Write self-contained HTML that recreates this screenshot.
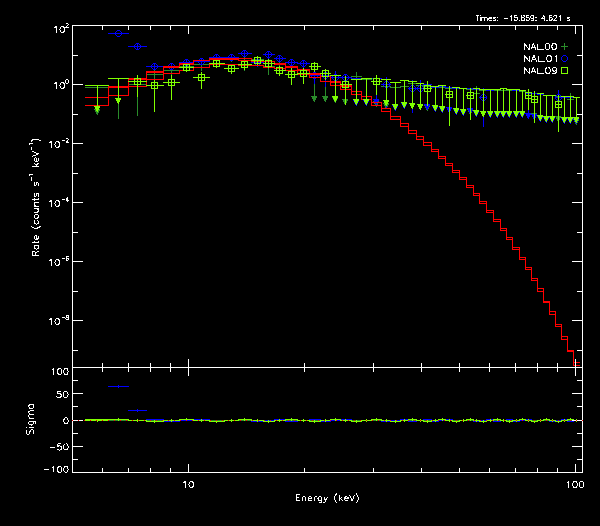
<!DOCTYPE html><html><head><meta charset="utf-8"><style>html,body{margin:0;padding:0;background:#000;width:600px;height:526px;overflow:hidden;position:relative}</style></head><body><svg width="600" height="526" viewBox="0 0 600 526" style="position:absolute;left:0;top:0" shape-rendering="crispEdges">
<rect width="600" height="526" fill="#000"/>
<path d="M85 87h24v1h-24zM97 87h1v23h-1zM94 109h6v1h-6zM95 110h5v1h-5zM95 111h4v1h-4zM96 112h3v1h-3zM96 113h2v1h-2zM97 114h1v1h-1zM108 87h21v1h-21zM118 80h1v39h-1zM115 87h7v1h-7zM118 84h1v7h-1zM128 84h19v1h-19zM137 77h1v39h-1zM134 84h7v1h-7zM137 81h1v7h-1zM146 74h18v1h-18zM154 70h1v21h-1zM151 74h7v1h-7zM154 71h1v7h-1zM163 70h17v1h-17zM171 66h1v10h-1zM168 70h7v1h-7zM171 67h1v7h-1zM179 66h15v1h-15zM186 62h1v10h-1zM183 66h7v1h-7zM186 63h1v7h-1zM193 64h17v1h-17zM201 60h1v11h-1zM198 64h7v1h-7zM201 61h1v7h-1zM209 59h16v1h-16zM216 56h1v8h-1zM213 59h7v1h-7zM216 56h1v7h-1zM224 57h15v1h-15zM231 54h1v8h-1zM228 57h7v1h-7zM231 54h1v7h-1zM238 60h14v1h-14zM244 58h1v13h-1zM241 60h7v1h-7zM244 57h1v7h-1zM251 59h13v1h-13zM257 56h1v9h-1zM254 59h7v1h-7zM257 56h1v7h-1zM263 66h12v1h-12zM268 60h1v15h-1zM265 66h7v1h-7zM268 63h1v7h-1zM274 63h12v1h-12zM279 60h1v9h-1zM276 63h7v1h-7zM279 60h1v7h-1zM285 67h13v1h-13zM291 63h1v12h-1zM288 67h7v1h-7zM291 64h1v7h-1zM297 70h13v1h-13zM303 65h1v12h-1zM300 70h7v1h-7zM303 67h1v7h-1zM309 75h12v1h-12zM314 75h1v22h-1zM311 96h6v1h-6zM312 97h5v1h-5zM312 98h4v1h-4zM313 99h3v1h-3zM313 100h2v1h-2zM314 101h1v1h-1zM320 76h11v1h-11zM325 76h1v21h-1zM322 96h6v1h-6zM323 97h5v1h-5zM323 98h4v1h-4zM324 99h3v1h-3zM324 100h2v1h-2zM325 101h1v1h-1zM330 81h11v1h-11zM335 81h1v17h-1zM332 97h6v1h-6zM333 98h5v1h-5zM333 99h4v1h-4zM334 100h3v1h-3zM334 101h2v1h-2zM335 102h1v1h-1zM340 84h12v1h-12zM345 84h1v16h-1zM342 99h6v1h-6zM343 100h5v1h-5zM343 101h4v1h-4zM344 102h3v1h-3zM344 103h2v1h-2zM345 104h1v1h-1zM351 76h11v1h-11zM356 72h1v9h-1zM353 76h7v1h-7zM356 73h1v7h-1zM361 79h11v1h-11zM366 79h1v21h-1zM363 99h6v1h-6zM364 100h5v1h-5zM364 101h4v1h-4zM365 102h3v1h-3zM365 103h2v1h-2zM366 104h1v1h-1zM371 81h11v1h-11zM376 81h1v21h-1zM373 101h6v1h-6zM374 102h5v1h-5zM374 103h4v1h-4zM375 104h3v1h-3zM375 105h2v1h-2zM376 106h1v1h-1zM381 86h10v1h-10zM386 86h1v18h-1zM383 103h6v1h-6zM384 104h5v1h-5zM384 105h4v1h-4zM385 106h3v1h-3zM385 107h2v1h-2zM386 108h1v1h-1zM390 87h11v1h-11zM395 87h1v18h-1zM392 104h6v1h-6zM393 105h5v1h-5zM393 106h4v1h-4zM394 107h3v1h-3zM394 108h2v1h-2zM395 109h1v1h-1zM400 86h9v1h-9zM404 86h1v18h-1zM401 103h6v1h-6zM402 104h5v1h-5zM402 105h4v1h-4zM403 106h3v1h-3zM403 107h2v1h-2zM404 108h1v1h-1zM408 83h9v1h-9zM412 83h1v21h-1zM409 103h6v1h-6zM410 104h5v1h-5zM410 105h4v1h-4zM411 106h3v1h-3zM411 107h2v1h-2zM412 108h1v1h-1zM416 85h8v1h-8zM420 85h1v20h-1zM417 104h6v1h-6zM418 105h5v1h-5zM418 106h4v1h-4zM419 107h3v1h-3zM419 108h2v1h-2zM420 109h1v1h-1zM423 86h9v1h-9zM427 86h1v20h-1zM424 105h6v1h-6zM425 106h5v1h-5zM425 107h4v1h-4zM426 108h3v1h-3zM426 109h2v1h-2zM427 110h1v1h-1zM431 86h8v1h-8zM435 86h1v20h-1zM432 105h6v1h-6zM433 106h5v1h-5zM433 107h4v1h-4zM434 108h3v1h-3zM434 109h2v1h-2zM435 110h1v1h-1zM438 87h8v1h-8zM442 87h1v20h-1zM439 106h6v1h-6zM440 107h5v1h-5zM440 108h4v1h-4zM441 109h3v1h-3zM441 110h2v1h-2zM442 111h1v1h-1zM445 88h8v1h-8zM449 88h1v20h-1zM446 107h6v1h-6zM447 108h5v1h-5zM447 109h4v1h-4zM448 110h3v1h-3zM448 111h2v1h-2zM449 112h1v1h-1zM452 88h8v1h-8zM456 88h1v21h-1zM453 108h6v1h-6zM454 109h5v1h-5zM454 110h4v1h-4zM455 111h3v1h-3zM455 112h2v1h-2zM456 113h1v1h-1zM459 88h8v1h-8zM463 88h1v22h-1zM460 109h6v1h-6zM461 110h5v1h-5zM461 111h4v1h-4zM462 112h3v1h-3zM462 113h2v1h-2zM463 114h1v1h-1zM466 89h8v1h-8zM470 89h1v21h-1zM467 109h6v1h-6zM468 110h5v1h-5zM468 111h4v1h-4zM469 112h3v1h-3zM469 113h2v1h-2zM470 114h1v1h-1zM473 93h7v1h-7zM476 86h1v15h-1zM473 93h7v1h-7zM476 90h1v7h-1zM479 90h8v1h-8zM483 90h1v22h-1zM480 111h6v1h-6zM481 112h5v1h-5zM481 113h4v1h-4zM482 114h3v1h-3zM482 115h2v1h-2zM483 116h1v1h-1zM486 90h8v1h-8zM490 90h1v22h-1zM487 111h6v1h-6zM488 112h5v1h-5zM488 113h4v1h-4zM489 114h3v1h-3zM489 115h2v1h-2zM490 116h1v1h-1zM493 90h8v1h-8zM497 90h1v22h-1zM494 111h6v1h-6zM495 112h5v1h-5zM495 113h4v1h-4zM496 114h3v1h-3zM496 115h2v1h-2zM497 116h1v1h-1zM500 90h7v1h-7zM503 90h1v22h-1zM500 111h6v1h-6zM501 112h5v1h-5zM501 113h4v1h-4zM502 114h3v1h-3zM502 115h2v1h-2zM503 116h1v1h-1zM506 90h7v1h-7zM509 90h1v22h-1zM506 111h6v1h-6zM507 112h5v1h-5zM507 113h4v1h-4zM508 114h3v1h-3zM508 115h2v1h-2zM509 116h1v1h-1zM512 90h8v1h-8zM516 90h1v22h-1zM513 111h6v1h-6zM514 112h5v1h-5zM514 113h4v1h-4zM515 114h3v1h-3zM515 115h2v1h-2zM516 116h1v1h-1zM519 91h7v1h-7zM522 91h1v22h-1zM519 112h6v1h-6zM520 113h5v1h-5zM520 114h4v1h-4zM521 115h3v1h-3zM521 116h2v1h-2zM522 117h1v1h-1zM525 92h7v1h-7zM528 92h1v22h-1zM525 113h6v1h-6zM526 114h5v1h-5zM526 115h4v1h-4zM527 116h3v1h-3zM527 117h2v1h-2zM528 118h1v1h-1zM531 93h7v1h-7zM534 93h1v21h-1zM531 113h6v1h-6zM532 114h5v1h-5zM532 115h4v1h-4zM533 116h3v1h-3zM533 117h2v1h-2zM534 118h1v1h-1zM537 94h7v1h-7zM540 94h1v22h-1zM537 115h6v1h-6zM538 116h5v1h-5zM538 117h4v1h-4zM539 118h3v1h-3zM539 119h2v1h-2zM540 120h1v1h-1zM543 95h7v1h-7zM546 95h1v22h-1zM543 116h6v1h-6zM544 117h5v1h-5zM544 118h4v1h-4zM545 119h3v1h-3zM545 120h2v1h-2zM546 121h1v1h-1zM549 95h7v1h-7zM552 95h1v23h-1zM549 117h6v1h-6zM550 118h5v1h-5zM550 119h4v1h-4zM551 120h3v1h-3zM551 121h2v1h-2zM552 122h1v1h-1zM555 96h7v1h-7zM558 96h1v21h-1zM555 116h6v1h-6zM556 117h5v1h-5zM556 118h4v1h-4zM557 119h3v1h-3zM557 120h2v1h-2zM558 121h1v1h-1zM561 96h7v1h-7zM564 96h1v23h-1zM561 118h6v1h-6zM562 119h5v1h-5zM562 120h4v1h-4zM563 121h3v1h-3zM563 122h2v1h-2zM564 123h1v1h-1zM567 99h7v1h-7zM570 93h1v13h-1zM567 99h7v1h-7zM570 96h1v7h-1zM573 97h7v1h-7zM576 97h1v23h-1zM573 119h6v1h-6zM574 120h5v1h-5zM574 121h4v1h-4zM575 122h3v1h-3zM575 123h2v1h-2zM576 124h1v1h-1z" fill="#2a8c2a"/>
<path d="M108 33h21v1h-21zM118 33h1v1h-1zM117 30h3v1h-3zM117 36h3v1h-3zM116 31h1v1h-1zM120 31h1v1h-1zM116 35h1v1h-1zM120 35h1v1h-1zM115 32h1v3h-1zM121 32h1v3h-1zM128 46h19v1h-19zM137 44h1v5h-1zM136 43h3v1h-3zM136 49h3v1h-3zM135 44h1v1h-1zM139 44h1v1h-1zM135 48h1v1h-1zM139 48h1v1h-1zM134 45h1v3h-1zM140 45h1v3h-1zM146 66h18v1h-18zM154 63h1v7h-1zM153 63h3v1h-3zM153 69h3v1h-3zM152 64h1v1h-1zM156 64h1v1h-1zM152 68h1v1h-1zM156 68h1v1h-1zM151 65h1v3h-1zM157 65h1v3h-1zM163 66h17v1h-17zM171 63h1v7h-1zM170 63h3v1h-3zM170 69h3v1h-3zM169 64h1v1h-1zM173 64h1v1h-1zM169 68h1v1h-1zM173 68h1v1h-1zM168 65h1v3h-1zM174 65h1v3h-1zM179 62h15v1h-15zM186 59h1v7h-1zM185 59h3v1h-3zM185 65h3v1h-3zM184 60h1v1h-1zM188 60h1v1h-1zM184 64h1v1h-1zM188 64h1v1h-1zM183 61h1v3h-1zM189 61h1v3h-1zM193 61h17v1h-17zM201 58h1v7h-1zM200 58h3v1h-3zM200 64h3v1h-3zM199 59h1v1h-1zM203 59h1v1h-1zM199 63h1v1h-1zM203 63h1v1h-1zM198 60h1v3h-1zM204 60h1v3h-1zM209 57h16v1h-16zM216 54h1v8h-1zM215 54h3v1h-3zM215 60h3v1h-3zM214 55h1v1h-1zM218 55h1v1h-1zM214 59h1v1h-1zM218 59h1v1h-1zM213 56h1v3h-1zM219 56h1v3h-1zM224 57h15v1h-15zM231 54h1v7h-1zM230 54h3v1h-3zM230 60h3v1h-3zM229 55h1v1h-1zM233 55h1v1h-1zM229 59h1v1h-1zM233 59h1v1h-1zM228 56h1v3h-1zM234 56h1v3h-1zM238 53h14v1h-14zM244 50h1v7h-1zM243 50h3v1h-3zM243 56h3v1h-3zM242 51h1v1h-1zM246 51h1v1h-1zM242 55h1v1h-1zM246 55h1v1h-1zM241 52h1v3h-1zM247 52h1v3h-1zM251 62h13v1h-13zM257 58h1v9h-1zM256 59h3v1h-3zM256 65h3v1h-3zM255 60h1v1h-1zM259 60h1v1h-1zM255 64h1v1h-1zM259 64h1v1h-1zM254 61h1v3h-1zM260 61h1v3h-1zM263 54h12v1h-12zM268 51h1v8h-1zM267 51h3v1h-3zM267 57h3v1h-3zM266 52h1v1h-1zM270 52h1v1h-1zM266 56h1v1h-1zM270 56h1v1h-1zM265 53h1v3h-1zM271 53h1v3h-1zM274 58h12v1h-12zM279 55h1v7h-1zM278 55h3v1h-3zM278 61h3v1h-3zM277 56h1v1h-1zM281 56h1v1h-1zM277 60h1v1h-1zM281 60h1v1h-1zM276 57h1v3h-1zM282 57h1v3h-1zM285 62h13v1h-13zM291 59h1v8h-1zM290 59h3v1h-3zM290 65h3v1h-3zM289 60h1v1h-1zM293 60h1v1h-1zM289 64h1v1h-1zM293 64h1v1h-1zM288 61h1v3h-1zM294 61h1v3h-1zM297 63h13v1h-13zM303 60h1v8h-1zM302 60h3v1h-3zM302 66h3v1h-3zM301 61h1v1h-1zM305 61h1v1h-1zM301 65h1v1h-1zM305 65h1v1h-1zM300 62h1v3h-1zM306 62h1v3h-1zM309 75h12v1h-12zM314 69h1v15h-1zM313 72h3v1h-3zM313 78h3v1h-3zM312 73h1v1h-1zM316 73h1v1h-1zM312 77h1v1h-1zM316 77h1v1h-1zM311 74h1v3h-1zM317 74h1v3h-1zM320 75h11v1h-11zM325 71h1v16h-1zM324 72h3v1h-3zM324 78h3v1h-3zM323 73h1v1h-1zM327 73h1v1h-1zM323 77h1v1h-1zM327 77h1v1h-1zM322 74h1v3h-1zM328 74h1v3h-1zM330 77h11v1h-11zM335 71h1v14h-1zM334 74h3v1h-3zM334 80h3v1h-3zM333 75h1v1h-1zM337 75h1v1h-1zM333 79h1v1h-1zM337 79h1v1h-1zM332 76h1v3h-1zM338 76h1v3h-1zM340 77h12v1h-12zM345 74h1v15h-1zM344 74h3v1h-3zM344 80h3v1h-3zM343 75h1v1h-1zM347 75h1v1h-1zM343 79h1v1h-1zM347 79h1v1h-1zM342 76h1v3h-1zM348 76h1v3h-1zM351 78h11v1h-11zM356 78h1v23h-1zM353 100h6v1h-6zM354 101h5v1h-5zM354 102h4v1h-4zM355 103h3v1h-3zM355 104h2v1h-2zM356 105h1v1h-1zM361 78h11v1h-11zM366 78h1v23h-1zM363 100h6v1h-6zM364 101h5v1h-5zM364 102h4v1h-4zM365 103h3v1h-3zM365 104h2v1h-2zM366 105h1v1h-1zM371 78h11v1h-11zM376 78h1v22h-1zM373 99h6v1h-6zM374 100h5v1h-5zM374 101h4v1h-4zM375 102h3v1h-3zM375 103h2v1h-2zM376 104h1v1h-1zM381 84h10v1h-10zM386 77h1v31h-1zM385 81h3v1h-3zM385 87h3v1h-3zM384 82h1v1h-1zM388 82h1v1h-1zM384 86h1v1h-1zM388 86h1v1h-1zM383 83h1v3h-1zM389 83h1v3h-1zM390 82h11v1h-11zM395 82h1v24h-1zM392 105h6v1h-6zM393 106h5v1h-5zM393 107h4v1h-4zM394 108h3v1h-3zM394 109h2v1h-2zM395 110h1v1h-1zM400 80h9v1h-9zM404 80h1v24h-1zM401 103h6v1h-6zM402 104h5v1h-5zM402 105h4v1h-4zM403 106h3v1h-3zM403 107h2v1h-2zM404 108h1v1h-1zM408 88h9v1h-9zM412 80h1v33h-1zM411 85h3v1h-3zM411 91h3v1h-3zM410 86h1v1h-1zM414 86h1v1h-1zM410 90h1v1h-1zM414 90h1v1h-1zM409 87h1v3h-1zM415 87h1v3h-1zM416 88h8v1h-8zM420 80h1v27h-1zM419 85h3v1h-3zM419 91h3v1h-3zM418 86h1v1h-1zM422 86h1v1h-1zM418 90h1v1h-1zM422 90h1v1h-1zM417 87h1v3h-1zM423 87h1v3h-1zM423 84h9v1h-9zM427 84h1v21h-1zM424 104h6v1h-6zM425 105h5v1h-5zM425 106h4v1h-4zM426 107h3v1h-3zM426 108h2v1h-2zM427 109h1v1h-1zM431 87h8v1h-8zM435 87h1v20h-1zM432 106h6v1h-6zM433 107h5v1h-5zM433 108h4v1h-4zM434 109h3v1h-3zM434 110h2v1h-2zM435 111h1v1h-1zM438 86h8v1h-8zM442 86h1v22h-1zM439 107h6v1h-6zM440 108h5v1h-5zM440 109h4v1h-4zM441 110h3v1h-3zM441 111h2v1h-2zM442 112h1v1h-1zM445 87h8v1h-8zM449 87h1v21h-1zM446 107h6v1h-6zM447 108h5v1h-5zM447 109h4v1h-4zM448 110h3v1h-3zM448 111h2v1h-2zM449 112h1v1h-1zM452 88h8v1h-8zM456 88h1v22h-1zM453 109h6v1h-6zM454 110h5v1h-5zM454 111h4v1h-4zM455 112h3v1h-3zM455 113h2v1h-2zM456 114h1v1h-1zM459 88h8v1h-8zM463 88h1v23h-1zM460 110h6v1h-6zM461 111h5v1h-5zM461 112h4v1h-4zM462 113h3v1h-3zM462 114h2v1h-2zM463 115h1v1h-1zM466 88h8v1h-8zM470 88h1v21h-1zM467 108h6v1h-6zM468 109h5v1h-5zM468 110h4v1h-4zM469 111h3v1h-3zM469 112h2v1h-2zM470 113h1v1h-1zM473 89h7v1h-7zM476 89h1v23h-1zM473 111h6v1h-6zM474 112h5v1h-5zM474 113h4v1h-4zM475 114h3v1h-3zM475 115h2v1h-2zM476 116h1v1h-1zM479 97h8v1h-8zM483 88h1v39h-1zM482 94h3v1h-3zM482 100h3v1h-3zM481 95h1v1h-1zM485 95h1v1h-1zM481 99h1v1h-1zM485 99h1v1h-1zM480 96h1v3h-1zM486 96h1v3h-1zM486 90h8v1h-8zM490 90h1v23h-1zM487 112h6v1h-6zM488 113h5v1h-5zM488 114h4v1h-4zM489 115h3v1h-3zM489 116h2v1h-2zM490 117h1v1h-1zM493 89h8v1h-8zM497 89h1v24h-1zM494 112h6v1h-6zM495 113h5v1h-5zM495 114h4v1h-4zM496 115h3v1h-3zM496 116h2v1h-2zM497 117h1v1h-1zM500 88h7v1h-7zM503 88h1v25h-1zM500 112h6v1h-6zM501 113h5v1h-5zM501 114h4v1h-4zM502 115h3v1h-3zM502 116h2v1h-2zM503 117h1v1h-1zM506 89h7v1h-7zM509 89h1v24h-1zM506 112h6v1h-6zM507 113h5v1h-5zM507 114h4v1h-4zM508 115h3v1h-3zM508 116h2v1h-2zM509 117h1v1h-1zM512 90h8v1h-8zM516 90h1v23h-1zM513 112h6v1h-6zM514 113h5v1h-5zM514 114h4v1h-4zM515 115h3v1h-3zM515 116h2v1h-2zM516 117h1v1h-1zM519 90h7v1h-7zM522 90h1v23h-1zM519 112h6v1h-6zM520 113h5v1h-5zM520 114h4v1h-4zM521 115h3v1h-3zM521 116h2v1h-2zM522 117h1v1h-1zM525 93h7v1h-7zM528 93h1v21h-1zM525 113h6v1h-6zM526 114h5v1h-5zM526 115h4v1h-4zM527 116h3v1h-3zM527 117h2v1h-2zM528 118h1v1h-1zM531 93h7v1h-7zM534 93h1v22h-1zM531 114h6v1h-6zM532 115h5v1h-5zM532 116h4v1h-4zM533 117h3v1h-3zM533 118h2v1h-2zM534 119h1v1h-1zM537 94h7v1h-7zM540 94h1v23h-1zM537 116h6v1h-6zM538 117h5v1h-5zM538 118h4v1h-4zM539 119h3v1h-3zM539 120h2v1h-2zM540 121h1v1h-1zM543 95h7v1h-7zM546 95h1v23h-1zM543 117h6v1h-6zM544 118h5v1h-5zM544 119h4v1h-4zM545 120h3v1h-3zM545 121h2v1h-2zM546 122h1v1h-1zM549 95h7v1h-7zM552 95h1v23h-1zM549 117h6v1h-6zM550 118h5v1h-5zM550 119h4v1h-4zM551 120h3v1h-3zM551 121h2v1h-2zM552 122h1v1h-1zM555 97h7v1h-7zM558 90h1v31h-1zM557 94h3v1h-3zM557 100h3v1h-3zM556 95h1v1h-1zM560 95h1v1h-1zM556 99h1v1h-1zM560 99h1v1h-1zM555 96h1v3h-1zM561 96h1v3h-1zM561 97h7v1h-7zM564 97h1v22h-1zM561 118h6v1h-6zM562 119h5v1h-5zM562 120h4v1h-4zM563 121h3v1h-3zM563 122h2v1h-2zM564 123h1v1h-1zM567 97h7v1h-7zM570 97h1v22h-1zM567 118h6v1h-6zM568 119h5v1h-5zM568 120h4v1h-4zM569 121h3v1h-3zM569 122h2v1h-2zM570 123h1v1h-1zM573 97h7v1h-7zM576 97h1v22h-1zM573 118h6v1h-6zM574 119h5v1h-5zM574 120h4v1h-4zM575 121h3v1h-3zM575 122h2v1h-2zM576 123h1v1h-1z" fill="#0000ff"/>
<path d="M85 97h24v1h-24zM108 86h21v1h-21zM108 86h1v12h-1zM128 78h19v1h-19zM128 78h1v9h-1zM146 71h18v1h-18zM146 71h1v8h-1zM163 66h17v1h-17zM163 66h1v6h-1zM179 63h15v1h-15zM179 63h1v4h-1zM193 60h17v1h-17zM193 60h1v4h-1zM209 58h16v1h-16zM209 58h1v3h-1zM224 58h15v1h-15zM224 58h1v1h-1zM238 58h14v1h-14zM238 58h1v1h-1zM251 60h13v1h-13zM251 58h1v3h-1zM263 61h12v1h-12zM263 60h1v2h-1zM274 63h12v1h-12zM274 61h1v3h-1zM285 66h13v1h-13zM285 63h1v4h-1zM297 69h13v1h-13zM297 66h1v4h-1zM309 73h12v1h-12zM309 69h1v5h-1zM320 76h11v1h-11zM320 73h1v4h-1zM330 81h11v1h-11zM330 76h1v6h-1zM340 85h12v1h-12zM340 81h1v5h-1zM351 91h11v1h-11zM351 85h1v7h-1zM361 96h11v1h-11zM361 91h1v6h-1zM371 102h11v1h-11zM371 96h1v7h-1zM381 108h10v1h-10zM381 102h1v7h-1zM390 116h11v1h-11zM390 108h1v9h-1zM400 123h9v1h-9zM400 116h1v8h-1zM408 130h9v1h-9zM408 123h1v8h-1zM416 136h8v1h-8zM416 130h1v7h-1zM423 142h9v1h-9zM423 136h1v7h-1zM431 149h8v1h-8zM431 142h1v8h-1zM438 156h8v1h-8zM438 149h1v8h-1zM445 163h8v1h-8zM445 156h1v8h-1zM452 170h8v1h-8zM452 163h1v8h-1zM459 177h8v1h-8zM459 170h1v8h-1zM466 185h8v1h-8zM466 177h1v9h-1zM473 193h7v1h-7zM473 185h1v9h-1zM479 201h8v1h-8zM479 193h1v9h-1zM486 210h8v1h-8zM486 201h1v10h-1zM493 219h8v1h-8zM493 210h1v10h-1zM500 228h7v1h-7zM500 219h1v10h-1zM506 237h7v1h-7zM506 228h1v10h-1zM512 247h8v1h-8zM512 237h1v11h-1zM519 257h7v1h-7zM519 247h1v11h-1zM525 267h7v1h-7zM525 257h1v11h-1zM531 278h7v1h-7zM531 267h1v12h-1zM537 288h7v1h-7zM537 278h1v11h-1zM543 301h7v1h-7zM543 288h1v14h-1zM549 311h7v1h-7zM549 301h1v11h-1zM555 324h7v1h-7zM555 311h1v14h-1zM561 336h7v1h-7zM561 324h1v13h-1zM567 350h7v1h-7zM567 336h1v15h-1zM573 362h7v1h-7zM573 350h1v13h-1zM85 105h24v1h-24zM108 95h21v1h-21zM108 95h1v11h-1zM128 86h19v1h-19zM128 86h1v10h-1zM146 79h18v1h-18zM146 79h1v8h-1zM163 73h17v1h-17zM163 73h1v7h-1zM179 70h15v1h-15zM179 70h1v4h-1zM193 67h17v1h-17zM193 67h1v4h-1zM209 64h16v1h-16zM209 64h1v4h-1zM224 64h15v1h-15zM224 64h1v1h-1zM238 65h14v1h-14zM238 64h1v2h-1zM251 65h13v1h-13zM251 65h1v1h-1zM263 67h12v1h-12zM263 65h1v3h-1zM274 68h12v1h-12zM274 67h1v2h-1zM285 70h13v1h-13zM285 68h1v3h-1zM297 74h13v1h-13zM297 70h1v5h-1zM309 77h12v1h-12zM309 74h1v4h-1zM320 81h11v1h-11zM320 77h1v5h-1zM330 85h11v1h-11zM330 81h1v5h-1zM340 89h12v1h-12zM340 85h1v5h-1zM351 94h11v1h-11zM351 89h1v6h-1zM361 99h11v1h-11zM361 94h1v6h-1zM371 105h11v1h-11zM371 99h1v7h-1zM381 111h10v1h-10zM381 105h1v7h-1zM390 119h11v1h-11zM390 111h1v9h-1zM400 126h9v1h-9zM400 119h1v8h-1zM408 133h9v1h-9zM408 126h1v8h-1zM416 139h8v1h-8zM416 133h1v7h-1zM423 145h9v1h-9zM423 139h1v7h-1zM431 151h8v1h-8zM431 145h1v7h-1zM438 158h8v1h-8zM438 151h1v8h-1zM445 165h8v1h-8zM445 158h1v8h-1zM452 172h8v1h-8zM452 165h1v8h-1zM459 179h8v1h-8zM459 172h1v8h-1zM466 187h8v1h-8zM466 179h1v9h-1zM473 195h7v1h-7zM473 187h1v9h-1zM479 203h8v1h-8zM479 195h1v9h-1zM486 212h8v1h-8zM486 203h1v10h-1zM493 221h8v1h-8zM493 212h1v10h-1zM500 230h7v1h-7zM500 221h1v10h-1zM506 239h7v1h-7zM506 230h1v10h-1zM512 249h8v1h-8zM512 239h1v11h-1zM519 259h7v1h-7zM519 249h1v11h-1zM525 269h7v1h-7zM525 259h1v11h-1zM531 280h7v1h-7zM531 269h1v12h-1zM537 291h7v1h-7zM537 280h1v12h-1zM543 302h7v1h-7zM543 291h1v12h-1zM549 314h7v1h-7zM549 302h1v13h-1zM555 326h7v1h-7zM555 314h1v13h-1zM561 339h7v1h-7zM561 326h1v14h-1zM567 351h7v1h-7zM567 339h1v13h-1zM573 365h7v1h-7zM573 351h1v15h-1zM108 87h21v1h-21zM128 79h19v1h-19zM128 79h1v9h-1zM146 72h18v1h-18zM146 72h1v8h-1zM163 67h17v1h-17zM163 67h1v6h-1zM179 64h15v1h-15zM179 64h1v4h-1zM193 60h17v1h-17zM193 60h1v5h-1zM209 59h16v1h-16zM209 59h1v2h-1zM224 59h15v1h-15zM224 59h1v1h-1zM238 60h14v1h-14zM238 59h1v2h-1zM251 61h13v1h-13zM251 60h1v2h-1zM263 61h12v1h-12zM263 61h1v1h-1zM274 64h12v1h-12zM274 61h1v4h-1zM285 67h13v1h-13zM285 64h1v4h-1zM297 70h13v1h-13zM297 67h1v4h-1zM309 74h12v1h-12zM309 70h1v5h-1zM320 76h11v1h-11zM320 74h1v3h-1zM330 82h11v1h-11zM330 76h1v7h-1zM340 86h12v1h-12zM340 82h1v5h-1zM351 91h11v1h-11zM351 86h1v6h-1zM361 96h11v1h-11zM361 91h1v6h-1zM371 102h11v1h-11zM371 96h1v7h-1zM381 108h10v1h-10zM381 102h1v7h-1zM390 116h11v1h-11zM390 108h1v9h-1zM400 123h9v1h-9zM400 116h1v8h-1zM408 130h9v1h-9zM408 123h1v8h-1zM416 136h8v1h-8zM416 130h1v7h-1zM423 142h9v1h-9zM423 136h1v7h-1zM431 149h8v1h-8zM431 142h1v8h-1zM438 156h8v1h-8zM438 149h1v8h-1zM445 163h8v1h-8zM445 156h1v8h-1zM452 170h8v1h-8zM452 163h1v8h-1zM459 177h8v1h-8zM459 170h1v8h-1zM466 185h8v1h-8zM466 177h1v9h-1zM473 193h7v1h-7zM473 185h1v9h-1zM479 201h8v1h-8zM479 193h1v9h-1zM486 210h8v1h-8zM486 201h1v10h-1zM493 219h8v1h-8zM493 210h1v10h-1zM500 228h7v1h-7zM500 219h1v10h-1zM506 237h7v1h-7zM506 228h1v10h-1zM512 247h8v1h-8zM512 237h1v11h-1zM519 257h7v1h-7zM519 247h1v11h-1zM525 267h7v1h-7zM525 257h1v11h-1zM531 278h7v1h-7zM531 267h1v12h-1zM537 288h7v1h-7zM537 278h1v11h-1zM543 301h7v1h-7zM543 288h1v14h-1zM549 311h7v1h-7zM549 301h1v11h-1zM555 324h7v1h-7zM555 311h1v14h-1zM561 336h7v1h-7zM561 324h1v13h-1zM567 350h7v1h-7zM567 336h1v15h-1zM573 362h7v1h-7zM573 350h1v13h-1z" fill="#ff0000"/>
<path d="M85 85h24v1h-24zM97 85h1v22h-1zM94 106h6v1h-6zM95 107h5v1h-5zM95 108h4v1h-4zM96 109h3v1h-3zM96 110h2v1h-2zM97 111h1v1h-1zM108 78h21v1h-21zM118 78h1v21h-1zM115 98h6v1h-6zM116 99h5v1h-5zM116 100h4v1h-4zM117 101h3v1h-3zM117 102h2v1h-2zM118 103h1v1h-1zM128 81h19v1h-19zM137 75h1v22h-1zM134 78h7v1h-7zM134 84h7v1h-7zM134 78h1v7h-1zM140 78h1v7h-1zM146 85h18v1h-18zM154 80h1v32h-1zM151 82h7v1h-7zM151 88h7v1h-7zM151 82h1v7h-1zM157 82h1v7h-1zM163 82h17v1h-17zM171 75h1v25h-1zM168 79h7v1h-7zM168 85h7v1h-7zM168 79h1v7h-1zM174 79h1v7h-1zM179 67h15v1h-15zM186 64h1v8h-1zM183 64h7v1h-7zM183 70h7v1h-7zM183 64h1v7h-1zM189 64h1v7h-1zM193 77h17v1h-17zM201 72h1v17h-1zM198 74h7v1h-7zM198 80h7v1h-7zM198 74h1v7h-1zM204 74h1v7h-1zM209 63h16v1h-16zM216 60h1v8h-1zM213 60h7v1h-7zM213 66h7v1h-7zM213 60h1v7h-1zM219 60h1v7h-1zM224 68h15v1h-15zM231 65h1v9h-1zM228 65h7v1h-7zM228 71h7v1h-7zM228 65h1v7h-1zM234 65h1v7h-1zM238 64h14v1h-14zM244 61h1v9h-1zM241 61h7v1h-7zM241 67h7v1h-7zM241 61h1v7h-1zM247 61h1v7h-1zM251 60h13v1h-13zM257 56h1v9h-1zM254 57h7v1h-7zM254 63h7v1h-7zM254 57h1v7h-1zM260 57h1v7h-1zM263 63h12v1h-12zM268 59h1v9h-1zM265 60h7v1h-7zM265 66h7v1h-7zM265 60h1v7h-1zM271 60h1v7h-1zM274 70h12v1h-12zM279 66h1v10h-1zM276 67h7v1h-7zM276 73h7v1h-7zM276 67h1v7h-1zM282 67h1v7h-1zM285 74h13v1h-13zM291 68h1v17h-1zM288 71h7v1h-7zM288 77h7v1h-7zM288 71h1v7h-1zM294 71h1v7h-1zM297 73h13v1h-13zM303 68h1v16h-1zM300 70h7v1h-7zM300 76h7v1h-7zM300 70h1v7h-1zM306 70h1v7h-1zM309 66h12v1h-12zM314 62h1v10h-1zM311 63h7v1h-7zM311 69h7v1h-7zM311 63h1v7h-1zM317 63h1v7h-1zM320 73h11v1h-11zM325 69h1v11h-1zM322 70h7v1h-7zM322 76h7v1h-7zM322 70h1v7h-1zM328 70h1v7h-1zM330 75h11v1h-11zM335 75h1v22h-1zM332 96h6v1h-6zM333 97h5v1h-5zM333 98h4v1h-4zM334 99h3v1h-3zM334 100h2v1h-2zM335 101h1v1h-1zM340 84h12v1h-12zM345 76h1v29h-1zM342 81h7v1h-7zM342 87h7v1h-7zM342 81h1v7h-1zM348 81h1v7h-1zM351 79h11v1h-11zM356 79h1v21h-1zM353 99h6v1h-6zM354 100h5v1h-5zM354 101h4v1h-4zM355 102h3v1h-3zM355 103h2v1h-2zM356 104h1v1h-1zM361 78h11v1h-11zM366 78h1v22h-1zM363 99h6v1h-6zM364 100h5v1h-5zM364 101h4v1h-4zM365 102h3v1h-3zM365 103h2v1h-2zM366 104h1v1h-1zM371 81h11v1h-11zM376 75h1v20h-1zM373 78h7v1h-7zM373 84h7v1h-7zM373 78h1v7h-1zM379 78h1v7h-1zM381 79h10v1h-10zM386 79h1v22h-1zM383 100h6v1h-6zM384 101h5v1h-5zM384 102h4v1h-4zM385 103h3v1h-3zM385 104h2v1h-2zM386 105h1v1h-1zM390 82h11v1h-11zM395 82h1v23h-1zM392 104h6v1h-6zM393 105h5v1h-5zM393 106h4v1h-4zM394 107h3v1h-3zM394 108h2v1h-2zM395 109h1v1h-1zM400 80h9v1h-9zM404 80h1v23h-1zM401 102h6v1h-6zM402 103h5v1h-5zM402 104h4v1h-4zM403 105h3v1h-3zM403 106h2v1h-2zM404 107h1v1h-1zM408 81h9v1h-9zM412 81h1v23h-1zM409 103h6v1h-6zM410 104h5v1h-5zM410 105h4v1h-4zM411 106h3v1h-3zM411 107h2v1h-2zM412 108h1v1h-1zM416 83h8v1h-8zM420 83h1v22h-1zM417 104h6v1h-6zM418 105h5v1h-5zM418 106h4v1h-4zM419 107h3v1h-3zM419 108h2v1h-2zM420 109h1v1h-1zM423 88h9v1h-9zM427 81h1v25h-1zM424 85h7v1h-7zM424 91h7v1h-7zM424 85h1v7h-1zM430 85h1v7h-1zM431 86h8v1h-8zM435 86h1v20h-1zM432 105h6v1h-6zM433 106h5v1h-5zM433 107h4v1h-4zM434 108h3v1h-3zM434 109h2v1h-2zM435 110h1v1h-1zM438 85h8v1h-8zM442 85h1v22h-1zM439 106h6v1h-6zM440 107h5v1h-5zM440 108h4v1h-4zM441 109h3v1h-3zM441 110h2v1h-2zM442 111h1v1h-1zM445 94h8v1h-8zM449 86h1v40h-1zM446 91h7v1h-7zM446 97h7v1h-7zM446 91h1v7h-1zM452 91h1v7h-1zM452 87h8v1h-8zM456 87h1v22h-1zM453 108h6v1h-6zM454 109h5v1h-5zM454 110h4v1h-4zM455 111h3v1h-3zM455 112h2v1h-2zM456 113h1v1h-1zM459 88h8v1h-8zM463 88h1v22h-1zM460 109h6v1h-6zM461 110h5v1h-5zM461 111h4v1h-4zM462 112h3v1h-3zM462 113h2v1h-2zM463 114h1v1h-1zM466 95h8v1h-8zM470 88h1v32h-1zM467 92h7v1h-7zM467 98h7v1h-7zM467 92h1v7h-1zM473 92h1v7h-1zM473 88h7v1h-7zM476 88h1v23h-1zM473 110h6v1h-6zM474 111h5v1h-5zM474 112h4v1h-4zM475 113h3v1h-3zM475 114h2v1h-2zM476 115h1v1h-1zM479 89h8v1h-8zM483 89h1v23h-1zM480 111h6v1h-6zM481 112h5v1h-5zM481 113h4v1h-4zM482 114h3v1h-3zM482 115h2v1h-2zM483 116h1v1h-1zM486 89h8v1h-8zM490 89h1v23h-1zM487 111h6v1h-6zM488 112h5v1h-5zM488 113h4v1h-4zM489 114h3v1h-3zM489 115h2v1h-2zM490 116h1v1h-1zM493 89h8v1h-8zM497 89h1v23h-1zM494 111h6v1h-6zM495 112h5v1h-5zM495 113h4v1h-4zM496 114h3v1h-3zM496 115h2v1h-2zM497 116h1v1h-1zM500 88h7v1h-7zM503 88h1v24h-1zM500 111h6v1h-6zM501 112h5v1h-5zM501 113h4v1h-4zM502 114h3v1h-3zM502 115h2v1h-2zM503 116h1v1h-1zM506 89h7v1h-7zM509 89h1v23h-1zM506 111h6v1h-6zM507 112h5v1h-5zM507 113h4v1h-4zM508 114h3v1h-3zM508 115h2v1h-2zM509 116h1v1h-1zM512 89h8v1h-8zM516 89h1v23h-1zM513 111h6v1h-6zM514 112h5v1h-5zM514 113h4v1h-4zM515 114h3v1h-3zM515 115h2v1h-2zM516 116h1v1h-1zM519 90h7v1h-7zM522 90h1v22h-1zM519 111h6v1h-6zM520 112h5v1h-5zM520 113h4v1h-4zM521 114h3v1h-3zM521 115h2v1h-2zM522 116h1v1h-1zM525 95h7v1h-7zM528 89h1v21h-1zM525 92h7v1h-7zM525 98h7v1h-7zM525 92h1v7h-1zM531 92h1v7h-1zM531 99h7v1h-7zM534 91h1v32h-1zM531 96h7v1h-7zM531 102h7v1h-7zM531 96h1v7h-1zM537 96h1v7h-1zM537 93h7v1h-7zM540 93h1v23h-1zM537 115h6v1h-6zM538 116h5v1h-5zM538 117h4v1h-4zM539 118h3v1h-3zM539 119h2v1h-2zM540 120h1v1h-1zM543 95h7v1h-7zM546 95h1v22h-1zM543 116h6v1h-6zM544 117h5v1h-5zM544 118h4v1h-4zM545 119h3v1h-3zM545 120h2v1h-2zM546 121h1v1h-1zM549 95h7v1h-7zM552 95h1v22h-1zM549 116h6v1h-6zM550 117h5v1h-5zM550 118h4v1h-4zM551 119h3v1h-3zM551 120h2v1h-2zM552 121h1v1h-1zM555 104h7v1h-7zM558 95h1v37h-1zM555 101h7v1h-7zM555 107h7v1h-7zM555 101h1v7h-1zM561 101h1v7h-1zM561 96h7v1h-7zM564 96h1v22h-1zM561 117h6v1h-6zM562 118h5v1h-5zM562 119h4v1h-4zM563 120h3v1h-3zM563 121h2v1h-2zM564 122h1v1h-1zM567 96h7v1h-7zM570 96h1v22h-1zM567 117h6v1h-6zM568 118h5v1h-5zM568 119h4v1h-4zM569 120h3v1h-3zM569 121h2v1h-2zM570 122h1v1h-1zM573 97h7v1h-7zM576 97h1v21h-1zM573 117h6v1h-6zM574 118h5v1h-5zM574 119h4v1h-4zM575 120h3v1h-3zM575 121h2v1h-2zM576 122h1v1h-1z" fill="#80ff00"/>
<path d="M85 420h24v1h-24zM108 420h21v1h-21zM128 420h19v1h-19zM146 420h18v1h-18zM163 420h17v1h-17zM179 420h15v1h-15zM193 420h17v1h-17zM209 420h16v1h-16zM224 420h15v1h-15zM238 420h14v1h-14zM251 420h13v1h-13zM263 420h12v1h-12zM274 420h12v1h-12zM285 420h13v1h-13zM297 420h13v1h-13zM309 420h12v1h-12zM320 420h11v1h-11zM330 420h11v1h-11zM340 420h12v1h-12zM351 420h11v1h-11zM361 420h11v1h-11zM371 420h11v1h-11zM381 420h10v1h-10zM390 420h11v1h-11zM400 420h9v1h-9zM408 420h9v1h-9zM416 420h8v1h-8zM423 420h9v1h-9zM431 420h8v1h-8zM438 420h8v1h-8zM445 420h8v1h-8zM452 420h8v1h-8zM459 420h8v1h-8zM466 420h8v1h-8zM473 420h7v1h-7zM479 420h8v1h-8zM486 420h8v1h-8zM493 420h8v1h-8zM500 420h7v1h-7zM506 420h7v1h-7zM512 420h8v1h-8zM519 420h7v1h-7zM525 420h7v1h-7zM531 420h7v1h-7zM537 420h7v1h-7zM543 420h7v1h-7zM549 420h7v1h-7zM555 420h7v1h-7zM561 420h7v1h-7zM567 420h7v1h-7zM573 420h7v1h-7z" fill="#2a8c2a"/>
<path d="M108 386h21v1h-21zM128 410h19v1h-19zM118 385h1v3h-1zM137 409h1v3h-1zM146 419h18v1h-18zM163 421h17v1h-17zM179 420h15v1h-15zM193 419h17v1h-17zM209 421h16v1h-16zM224 420h15v1h-15zM238 419h14v1h-14zM251 421h13v1h-13zM263 420h12v1h-12zM274 419h12v1h-12zM285 421h13v1h-13zM297 420h13v1h-13zM309 419h12v1h-12zM320 421h11v1h-11zM330 420h11v1h-11zM340 419h12v1h-12zM351 421h11v1h-11zM361 420h11v1h-11zM371 419h11v1h-11zM381 421h10v1h-10zM390 420h11v1h-11zM400 419h9v1h-9zM408 421h9v1h-9zM416 420h8v1h-8zM423 419h9v1h-9zM431 421h8v1h-8zM438 420h8v1h-8zM445 419h8v1h-8zM452 421h8v1h-8zM459 420h8v1h-8zM466 419h8v1h-8zM473 421h7v1h-7zM479 420h8v1h-8zM486 419h8v1h-8zM493 421h8v1h-8zM500 420h7v1h-7zM506 419h7v1h-7zM512 421h8v1h-8zM519 420h7v1h-7zM525 419h7v1h-7zM531 421h7v1h-7zM537 420h7v1h-7zM543 419h7v1h-7zM549 421h7v1h-7zM555 420h7v1h-7zM561 419h7v1h-7zM567 421h7v1h-7zM573 420h7v1h-7z" fill="#0000ff"/>
<path d="M85 420h24v1h-24zM97 419h1v3h-1zM108 419h21v1h-21zM118 418h1v3h-1zM128 420h19v1h-19zM137 419h1v3h-1zM146 421h18v1h-18zM154 420h1v3h-1zM163 420h17v1h-17zM171 419h1v3h-1zM179 419h15v1h-15zM186 418h1v3h-1zM193 420h17v1h-17zM201 419h1v3h-1zM209 421h16v1h-16zM216 420h1v3h-1zM224 420h15v1h-15zM231 419h1v3h-1zM238 419h14v1h-14zM244 418h1v3h-1zM251 420h13v1h-13zM257 419h1v3h-1zM263 421h12v1h-12zM268 420h1v3h-1zM274 420h12v1h-12zM279 419h1v3h-1zM285 419h13v1h-13zM291 418h1v3h-1zM297 420h13v1h-13zM303 419h1v3h-1zM309 421h12v1h-12zM314 420h1v3h-1zM320 420h11v1h-11zM325 419h1v3h-1zM330 419h11v1h-11zM335 418h1v3h-1zM340 420h12v1h-12zM345 419h1v3h-1zM351 421h11v1h-11zM356 420h1v3h-1zM361 420h11v1h-11zM366 419h1v3h-1zM371 419h11v1h-11zM376 418h1v3h-1zM381 420h10v1h-10zM386 419h1v3h-1zM390 421h11v1h-11zM395 420h1v3h-1zM400 420h9v1h-9zM404 419h1v3h-1zM408 419h9v1h-9zM412 418h1v3h-1zM416 420h8v1h-8zM420 419h1v3h-1zM423 421h9v1h-9zM427 420h1v3h-1zM431 420h8v1h-8zM435 419h1v3h-1zM438 419h8v1h-8zM442 418h1v3h-1zM445 420h8v1h-8zM449 419h1v3h-1zM452 421h8v1h-8zM456 420h1v3h-1zM459 420h8v1h-8zM463 419h1v3h-1zM466 419h8v1h-8zM470 418h1v3h-1zM473 420h7v1h-7zM476 419h1v3h-1zM479 421h8v1h-8zM483 420h1v3h-1zM486 420h8v1h-8zM490 419h1v3h-1zM493 419h8v1h-8zM497 418h1v3h-1zM500 420h7v1h-7zM503 419h1v3h-1zM506 421h7v1h-7zM509 420h1v3h-1zM512 420h8v1h-8zM516 419h1v3h-1zM519 419h7v1h-7zM522 418h1v3h-1zM525 420h7v1h-7zM528 419h1v3h-1zM531 421h7v1h-7zM534 420h1v3h-1zM537 420h7v1h-7zM540 419h1v3h-1zM543 419h7v1h-7zM546 418h1v3h-1zM549 420h7v1h-7zM552 419h1v3h-1zM555 421h7v1h-7zM558 420h1v3h-1zM561 420h7v1h-7zM564 419h1v3h-1zM567 419h7v1h-7zM570 418h1v3h-1zM573 420h7v1h-7zM576 419h1v3h-1zM85 419h24v1h-24z" fill="#80ff00"/>
<path d="M72 25h511v1h-511zM72 367h511v1h-511zM72 472h511v1h-511zM72 25h1v448h-1zM582 25h1v448h-1zM102 25h1v5h-1zM102 363h1v9h-1zM102 468h1v5h-1zM128 25h1v5h-1zM128 363h1v9h-1zM128 468h1v5h-1zM150 25h1v5h-1zM150 363h1v9h-1zM150 468h1v5h-1zM170 25h1v5h-1zM170 363h1v9h-1zM170 468h1v5h-1zM188 25h1v9h-1zM188 359h1v17h-1zM188 464h1v9h-1zM304 25h1v5h-1zM304 363h1v9h-1zM304 468h1v5h-1zM373 25h1v5h-1zM373 363h1v9h-1zM373 468h1v5h-1zM421 25h1v5h-1zM421 363h1v9h-1zM421 468h1v5h-1zM459 25h1v5h-1zM459 363h1v9h-1zM459 468h1v5h-1zM489 25h1v5h-1zM489 363h1v9h-1zM489 468h1v5h-1zM515 25h1v5h-1zM515 363h1v9h-1zM515 468h1v5h-1zM537 25h1v5h-1zM537 363h1v9h-1zM537 468h1v5h-1zM557 25h1v5h-1zM557 363h1v9h-1zM557 468h1v5h-1zM575 25h1v9h-1zM575 359h1v17h-1zM575 464h1v9h-1zM72 25h11v1h-11zM572 25h11v1h-11zM72 55h6v1h-6zM577 55h6v1h-6zM72 84h11v1h-11zM572 84h11v1h-11zM72 114h6v1h-6zM577 114h6v1h-6zM72 143h11v1h-11zM572 143h11v1h-11zM72 173h6v1h-6zM577 173h6v1h-6zM72 202h11v1h-11zM572 202h11v1h-11zM72 232h6v1h-6zM577 232h6v1h-6zM72 261h11v1h-11zM572 261h11v1h-11zM72 291h6v1h-6zM577 291h6v1h-6zM72 320h11v1h-11zM572 320h11v1h-11zM72 350h6v1h-6zM577 350h6v1h-6zM72 380h6v1h-6zM577 380h6v1h-6zM72 393h11v1h-11zM572 393h11v1h-11zM72 406h6v1h-6zM577 406h6v1h-6zM72 420h11v1h-11zM572 420h11v1h-11zM72 433h6v1h-6zM577 433h6v1h-6zM72 446h11v1h-11zM572 446h11v1h-11zM72 459h6v1h-6zM577 459h6v1h-6z" fill="#fff"/>
<path d="M72 420h1v1h-1zM78 420h1v1h-1zM84 420h1v1h-1zM90 420h1v1h-1zM96 420h1v1h-1zM102 420h1v1h-1zM108 420h1v1h-1zM114 420h1v1h-1zM120 420h1v1h-1zM126 420h1v1h-1zM132 420h1v1h-1zM138 420h1v1h-1zM144 420h1v1h-1zM150 420h1v1h-1zM156 420h1v1h-1zM162 420h1v1h-1zM168 420h1v1h-1zM174 420h1v1h-1zM180 420h1v1h-1zM186 420h1v1h-1zM192 420h1v1h-1zM198 420h1v1h-1zM204 420h1v1h-1zM210 420h1v1h-1zM216 420h1v1h-1zM222 420h1v1h-1zM228 420h1v1h-1zM234 420h1v1h-1zM240 420h1v1h-1zM246 420h1v1h-1zM252 420h1v1h-1zM258 420h1v1h-1zM264 420h1v1h-1zM270 420h1v1h-1zM276 420h1v1h-1zM282 420h1v1h-1zM288 420h1v1h-1zM294 420h1v1h-1zM300 420h1v1h-1zM306 420h1v1h-1zM312 420h1v1h-1zM318 420h1v1h-1zM324 420h1v1h-1zM330 420h1v1h-1zM336 420h1v1h-1zM342 420h1v1h-1zM348 420h1v1h-1zM354 420h1v1h-1zM360 420h1v1h-1zM366 420h1v1h-1zM372 420h1v1h-1zM378 420h1v1h-1zM384 420h1v1h-1zM390 420h1v1h-1zM396 420h1v1h-1zM402 420h1v1h-1zM408 420h1v1h-1zM414 420h1v1h-1zM420 420h1v1h-1zM426 420h1v1h-1zM432 420h1v1h-1zM438 420h1v1h-1zM444 420h1v1h-1zM450 420h1v1h-1zM456 420h1v1h-1zM462 420h1v1h-1zM468 420h1v1h-1zM474 420h1v1h-1zM480 420h1v1h-1zM486 420h1v1h-1zM492 420h1v1h-1zM498 420h1v1h-1zM504 420h1v1h-1zM510 420h1v1h-1zM516 420h1v1h-1zM522 420h1v1h-1zM528 420h1v1h-1zM534 420h1v1h-1zM540 420h1v1h-1zM546 420h1v1h-1zM552 420h1v1h-1zM558 420h1v1h-1zM564 420h1v1h-1zM570 420h1v1h-1zM576 420h1v1h-1zM582 420h1v1h-1z" fill="#ff0000"/>
<g transform="translate(38.5,256.768) rotate(-90)" shape-rendering="crispEdges"><path d="M1.27 -6.30L1.27 0.00M1.27 -6.30L4.12 -6.30L5.07 -6.00L5.39 -5.70L5.71 -5.10L5.71 -4.50L5.39 -3.90L5.07 -3.60L4.12 -3.30L1.27 -3.30M3.49 -3.30L5.71 0.00M11.41 -4.20L11.41 0.00M11.41 -3.30L10.78 -3.90L10.14 -4.20L9.19 -4.20L8.56 -3.90L7.92 -3.30L7.61 -2.40L7.61 -1.80L7.92 -0.90L8.56 -0.30L9.19 0.00L10.14 0.00L10.78 -0.30L11.41 -0.90M14.27 -6.30L14.27 -1.20L14.58 -0.30L15.22 0.00L15.85 0.00M13.31 -4.20L15.53 -4.20M17.43 -2.40L21.24 -2.40L21.24 -3.00L20.92 -3.60L20.61 -3.90L19.97 -4.20L19.02 -4.20L18.39 -3.90L17.75 -3.30L17.43 -2.40L17.43 -1.80L17.75 -0.90L18.39 -0.30L19.02 0.00L19.97 0.00L20.61 -0.30L21.24 -0.90M30.75 -7.50L30.12 -6.90L29.48 -6.00L28.85 -4.80L28.53 -3.30L28.53 -2.10L28.85 -0.60L29.48 0.60L30.12 1.50L30.75 2.10M36.45 -3.30L35.82 -3.90L35.19 -4.20L34.24 -4.20L33.60 -3.90L32.97 -3.30L32.65 -2.40L32.65 -1.80L32.97 -0.90L33.60 -0.30L34.24 0.00L35.19 0.00L35.82 -0.30L36.45 -0.90M39.94 -4.20L39.31 -3.90L38.67 -3.30L38.36 -2.40L38.36 -1.80L38.67 -0.90L39.31 -0.30L39.94 0.00L40.89 0.00L41.53 -0.30L42.16 -0.90L42.48 -1.80L42.48 -2.40L42.16 -3.30L41.53 -3.90L40.89 -4.20L39.94 -4.20M44.70 -4.20L44.70 -1.20L45.01 -0.30L45.65 0.00L46.60 0.00L47.23 -0.30L48.18 -1.20M48.18 -4.20L48.18 0.00M50.72 -4.20L50.72 0.00M50.72 -3.00L51.67 -3.90L52.30 -4.20L53.26 -4.20L53.89 -3.90L54.21 -3.00L54.21 0.00M57.06 -6.30L57.06 -1.20L57.38 -0.30L58.01 0.00L58.65 0.00M56.11 -4.20L58.33 -4.20M63.72 -3.30L63.40 -3.90L62.45 -4.20L61.50 -4.20L60.55 -3.90L60.23 -3.30L60.55 -2.70L61.18 -2.40L62.77 -2.10L63.40 -1.80L63.72 -1.20L63.72 -0.90L63.40 -0.30L62.45 0.00L61.50 0.00L60.55 -0.30L60.23 -0.90M74.18 -3.30L73.86 -3.90L72.91 -4.20L71.96 -4.20L71.01 -3.90L70.69 -3.30L71.01 -2.70L71.64 -2.40L73.23 -2.10L73.86 -1.80L74.18 -1.20L74.18 -0.90L73.86 -0.30L72.91 0.00L71.96 0.00L71.01 -0.30L70.69 -0.90M75.89 -7.12L79.31 -7.12M81.22 -8.56L81.60 -8.74L82.17 -9.28L82.17 -5.50M90.22 -6.30L90.22 0.00M93.39 -4.20L90.22 -1.20M91.49 -2.40L93.71 0.00M95.29 -2.40L99.09 -2.40L99.09 -3.00L98.78 -3.60L98.46 -3.90L97.83 -4.20L96.88 -4.20L96.24 -3.90L95.61 -3.30L95.29 -2.40L95.29 -1.80L95.61 -0.90L96.24 -0.30L96.88 0.00L97.83 0.00L98.46 -0.30L99.09 -0.90M100.36 -6.30L102.90 0.00M105.43 -6.30L102.90 0.00M106.51 -7.12L109.94 -7.12M111.84 -8.56L112.22 -8.74L112.79 -9.28L112.79 -5.50M115.45 -7.50L116.09 -6.90L116.72 -6.00L117.35 -4.80L117.67 -3.30L117.67 -2.10L117.35 -0.60L116.72 0.60L116.09 1.50L115.45 2.10" stroke="#fff" stroke-width="1" fill="none" stroke-linejoin="bevel"/></g>
<g transform="translate(33.5,434.4) rotate(-90)" shape-rendering="crispEdges"><path d="M4.69 -6.03L4.02 -6.70L3.02 -7.04L1.68 -7.04L0.67 -6.70L0.00 -6.03L0.00 -5.36L0.33 -4.69L0.67 -4.36L1.34 -4.02L3.35 -3.35L4.02 -3.02L4.36 -2.68L4.69 -2.01L4.69 -1.01L4.02 -0.34L3.02 0.00L1.68 0.00L0.67 -0.34L0.00 -1.01M6.70 -7.04L7.04 -6.70L7.37 -7.04L7.04 -7.37L6.70 -7.04M7.04 -4.69L7.04 0.00M13.40 -4.69L13.40 0.67L13.06 1.68L12.73 2.01L12.06 2.35L11.05 2.35L10.38 2.01M13.40 -3.69L12.73 -4.36L12.06 -4.69L11.05 -4.69L10.38 -4.36L9.71 -3.69L9.38 -2.68L9.38 -2.01L9.71 -1.01L10.38 -0.34L11.05 0.00L12.06 0.00L12.73 -0.34L13.40 -1.01M16.08 -4.69L16.08 0.00M16.08 -3.35L17.09 -4.36L17.76 -4.69L18.76 -4.69L19.43 -4.36L19.77 -3.35L19.77 0.00M19.77 -3.35L20.77 -4.36L21.44 -4.69L22.45 -4.69L23.12 -4.36L23.45 -3.35L23.45 0.00M29.82 -4.69L29.82 0.00M29.82 -3.69L29.15 -4.36L28.48 -4.69L27.47 -4.69L26.80 -4.36L26.13 -3.69L25.80 -2.68L25.80 -2.01L26.13 -1.01L26.80 -0.34L27.47 0.00L28.48 0.00L29.15 -0.34L29.82 -1.01" stroke="#fff" stroke-width="1" fill="none" stroke-linejoin="bevel"/></g>
<path d="M477.16 15.50L477.16 20.50M475.50 15.50L478.82 15.50M479.77 15.50L480.01 15.74L480.25 15.50L480.01 15.26L479.77 15.50M480.01 17.17L480.01 20.50M481.91 17.17L481.91 20.50M481.91 18.12L482.62 17.40L483.10 17.17L483.81 17.17L484.28 17.40L484.52 18.12L484.52 20.50M484.52 18.12L485.23 17.40L485.71 17.17L486.42 17.17L486.89 17.40L487.13 18.12L487.13 20.50M488.79 18.60L491.64 18.60L491.64 18.12L491.40 17.64L491.17 17.40L490.69 17.17L489.98 17.17L489.51 17.40L489.03 17.88L488.79 18.60L488.79 19.07L489.03 19.79L489.51 20.26L489.98 20.50L490.69 20.50L491.17 20.26L491.64 19.79M495.68 17.88L495.44 17.40L494.73 17.17L494.02 17.17L493.30 17.40L493.07 17.88L493.30 18.36L493.78 18.60L494.96 18.83L495.44 19.07L495.68 19.55L495.68 19.79L495.44 20.26L494.73 20.50L494.02 20.50L493.30 20.26L493.07 19.79M497.58 17.17L497.34 17.40L497.58 17.64L497.81 17.40L497.58 17.17M497.58 20.02L497.34 20.26L497.58 20.50L497.81 20.26L497.58 20.02M503.51 18.36L507.78 18.36M510.16 16.45L510.63 16.21L511.34 15.50L511.34 20.50M517.04 15.50L514.67 15.50L514.43 17.64L514.67 17.40L515.38 17.17L516.09 17.17L516.80 17.40L517.28 17.88L517.52 18.60L517.52 19.07L517.28 19.79L516.80 20.26L516.09 20.50L515.38 20.50L514.67 20.26L514.43 20.02L514.19 19.55M519.41 20.02L519.18 20.26L519.41 20.50L519.65 20.26L519.41 20.02M522.50 15.50L521.79 15.74L521.55 16.21L521.55 16.69L521.79 17.17L522.26 17.40L523.21 17.64L523.92 17.88L524.40 18.36L524.64 18.83L524.64 19.55L524.40 20.02L524.16 20.26L523.45 20.50L522.50 20.50L521.79 20.26L521.55 20.02L521.31 19.55L521.31 18.83L521.55 18.36L522.03 17.88L522.74 17.64L523.69 17.40L524.16 17.17L524.40 16.69L524.40 16.21L524.16 15.74L523.45 15.50L522.50 15.50M528.91 15.50L526.54 15.50L526.30 17.64L526.54 17.40L527.25 17.17L527.96 17.17L528.67 17.40L529.15 17.88L529.38 18.60L529.38 19.07L529.15 19.79L528.67 20.26L527.96 20.50L527.25 20.50L526.54 20.26L526.30 20.02L526.06 19.55M533.89 17.17L533.66 17.88L533.18 18.36L532.47 18.60L532.23 18.60L531.52 18.36L531.05 17.88L530.81 17.17L530.81 16.93L531.05 16.21L531.52 15.74L532.23 15.50L532.47 15.50L533.18 15.74L533.66 16.21L533.89 17.17L533.89 18.36L533.66 19.55L533.18 20.26L532.47 20.50L531.99 20.50L531.28 20.26L531.05 19.79M536.03 17.17L535.79 17.40L536.03 17.64L536.27 17.40L536.03 17.17M536.03 20.02L535.79 20.26L536.03 20.50L536.27 20.26L536.03 20.02M544.10 15.50L541.73 18.83L545.29 18.83M544.10 15.50L544.10 20.50M546.95 20.02L546.71 20.26L546.95 20.50L547.19 20.26L546.95 20.02M551.93 16.21L551.70 15.74L550.98 15.50L550.51 15.50L549.80 15.74L549.32 16.45L549.09 17.64L549.09 18.83L549.32 19.79L549.80 20.26L550.51 20.50L550.75 20.50L551.46 20.26L551.93 19.79L552.17 19.07L552.17 18.83L551.93 18.12L551.46 17.64L550.75 17.40L550.51 17.40L549.80 17.64L549.32 18.12L549.09 18.83M553.83 16.69L553.83 16.45L554.07 15.98L554.31 15.74L554.78 15.50L555.73 15.50L556.21 15.74L556.44 15.98L556.68 16.45L556.68 16.93L556.44 17.40L555.97 18.12L553.60 20.50L556.92 20.50M559.06 16.45L559.53 16.21L560.24 15.50L560.24 20.50M569.50 17.88L569.26 17.40L568.55 17.17L567.84 17.17L567.13 17.40L566.89 17.88L567.13 18.36L567.60 18.60L568.79 18.83L569.26 19.07L569.50 19.55L569.50 19.79L569.26 20.26L568.55 20.50L567.84 20.50L567.13 20.26L566.89 19.79M524.50 43.50L524.50 49.50M524.50 43.50L529.12 49.50M529.12 43.50L529.12 49.50M533.41 43.50L530.77 49.50M533.41 43.50L536.05 49.50M531.76 47.50L535.06 47.50M537.70 43.50L537.70 49.50M537.70 49.50L543.63 49.50M547.26 43.50L546.27 43.79L545.61 44.64L545.28 46.07L545.28 46.93L545.61 48.36L546.27 49.21L547.26 49.50L547.92 49.50L548.91 49.21L549.57 48.36L549.90 46.93L549.90 46.07L549.57 44.64L548.91 43.79L547.92 43.50L547.26 43.50M553.86 43.50L552.87 43.79L552.21 44.64L551.88 46.07L551.88 46.93L552.21 48.36L552.87 49.21L553.86 49.50L554.52 49.50L555.51 49.21L556.17 48.36L556.50 46.93L556.50 46.07L556.17 44.64L555.51 43.79L554.52 43.50L553.86 43.50M524.50 55.50L524.50 61.50M524.50 55.50L529.42 61.50M529.42 55.50L529.42 61.50M533.99 55.50L531.18 61.50M533.99 55.50L536.81 61.50M532.24 59.50L535.75 59.50M538.57 55.50L538.57 61.50M538.57 61.50L544.90 61.50M548.76 55.50L547.71 55.79L547.01 56.64L546.65 58.07L546.65 58.93L547.01 60.36L547.71 61.21L548.76 61.50L549.47 61.50L550.52 61.21L551.23 60.36L551.58 58.93L551.58 58.07L551.23 56.64L550.52 55.79L549.47 55.50L548.76 55.50M554.74 56.64L555.45 56.36L556.50 55.50L556.50 61.50M524.50 67.50L524.50 73.50M524.50 67.50L529.17 73.50M529.17 67.50L529.17 73.50M533.50 67.50L530.83 73.50M533.50 67.50L536.17 73.50M531.83 71.50L535.17 71.50M537.83 67.50L537.83 73.50M537.83 73.50L543.83 73.50M547.50 67.50L546.50 67.79L545.83 68.64L545.50 70.07L545.50 70.93L545.83 72.36L546.50 73.21L547.50 73.50L548.17 73.50L549.17 73.21L549.83 72.36L550.17 70.93L550.17 70.07L549.83 68.64L549.17 67.79L548.17 67.50L547.50 67.50M556.50 69.50L556.17 70.36L555.50 70.93L554.50 71.21L554.17 71.21L553.17 70.93L552.50 70.36L552.17 69.50L552.17 69.21L552.50 68.36L553.17 67.79L554.17 67.50L554.50 67.50L555.50 67.79L556.17 68.36L556.50 69.50L556.50 70.93L556.17 72.36L555.50 73.21L554.50 73.50L553.83 73.50L552.83 73.21L552.50 72.64M54.50 27.64L55.15 27.36L56.11 26.50L56.11 32.50M61.92 26.50L60.95 26.79L60.31 27.64L59.98 29.07L59.98 29.93L60.31 31.36L60.95 32.21L61.92 32.50L62.56 32.50L63.53 32.21L64.18 31.36L64.50 29.93L64.50 29.07L64.18 27.64L63.53 26.79L62.56 26.50L61.92 26.50M65.71 24.45L65.71 24.26L65.93 23.88L66.14 23.69L66.57 23.50L67.43 23.50L67.86 23.69L68.07 23.88L68.29 24.26L68.29 24.64L68.07 25.02L67.64 25.60L65.50 27.50L68.50 27.50M54.50 83.64L55.15 83.36L56.11 82.50L56.11 88.50M61.92 82.50L60.95 82.79L60.31 83.64L59.98 85.07L59.98 85.93L60.31 87.36L60.95 88.21L61.92 88.50L62.56 88.50L63.53 88.21L64.18 87.36L64.50 85.93L64.50 85.07L64.18 83.64L63.53 82.79L62.56 82.50L61.92 82.50M66.79 79.50L66.14 79.69L65.71 80.26L65.50 81.21L65.50 81.79L65.71 82.74L66.14 83.31L66.79 83.50L67.21 83.50L67.86 83.31L68.29 82.74L68.50 81.79L68.50 81.21L68.29 80.26L67.86 79.69L67.21 79.50L66.79 79.50M49.50 142.64L50.15 142.36L51.11 141.50L51.11 147.50M56.92 141.50L55.95 141.79L55.31 142.64L54.98 144.07L54.98 144.93L55.31 146.36L55.95 147.21L56.92 147.50L57.56 147.50L58.53 147.21L59.18 146.36L59.50 144.93L59.50 144.07L59.18 142.64L58.53 141.79L57.56 141.50L56.92 141.50M61.50 140.79L64.73 140.79M66.17 139.45L66.17 139.26L66.35 138.88L66.53 138.69L66.88 138.50L67.60 138.50L67.96 138.69L68.14 138.88L68.32 139.26L68.32 139.64L68.14 140.02L67.78 140.60L65.99 142.50L68.50 142.50M49.50 201.64L50.15 201.36L51.11 200.50L51.11 206.50M56.92 200.50L55.95 200.79L55.31 201.64L54.98 203.07L54.98 203.93L55.31 205.36L55.95 206.21L56.92 206.50L57.56 206.50L58.53 206.21L59.18 205.36L59.50 203.93L59.50 203.07L59.18 201.64L58.53 200.79L57.56 200.50L56.92 200.50M61.50 199.79L64.65 199.79M67.62 197.50L65.88 200.17L68.50 200.17M67.62 197.50L67.62 201.50M49.50 260.64L50.15 260.36L51.11 259.50L51.11 265.50M56.92 259.50L55.95 259.79L55.31 260.64L54.98 262.07L54.98 262.93L55.31 264.36L55.95 265.21L56.92 265.50L57.56 265.50L58.53 265.21L59.18 264.36L59.50 262.93L59.50 262.07L59.18 260.64L58.53 259.79L57.56 259.50L56.92 259.50M61.50 258.79L64.73 258.79M68.32 257.07L68.14 256.69L67.60 256.50L67.24 256.50L66.71 256.69L66.35 257.26L66.17 258.21L66.17 259.17L66.35 259.93L66.71 260.31L67.24 260.50L67.42 260.50L67.96 260.31L68.32 259.93L68.50 259.36L68.50 259.17L68.32 258.60L67.96 258.21L67.42 258.02L67.24 258.02L66.71 258.21L66.35 258.60L66.17 259.17M49.50 319.64L50.15 319.36L51.11 318.50L51.11 324.50M56.92 318.50L55.95 318.79L55.31 319.64L54.98 321.07L54.98 321.93L55.31 323.36L55.95 324.21L56.92 324.50L57.56 324.50L58.53 324.21L59.18 323.36L59.50 321.93L59.50 321.07L59.18 319.64L58.53 318.79L57.56 318.50L56.92 318.50M61.50 317.79L64.73 317.79M66.88 315.50L66.35 315.69L66.17 316.07L66.17 316.45L66.35 316.83L66.71 317.02L67.42 317.21L67.96 317.40L68.32 317.79L68.50 318.17L68.50 318.74L68.32 319.12L68.14 319.31L67.60 319.50L66.88 319.50L66.35 319.31L66.17 319.12L65.99 318.74L65.99 318.17L66.17 317.79L66.53 317.40L67.06 317.21L67.78 317.02L68.14 316.83L68.32 316.45L68.32 316.07L68.14 315.69L67.60 315.50L66.88 315.50M183.50 482.64L184.15 482.36L185.11 481.50L185.11 487.50M190.92 481.50L189.95 481.79L189.31 482.64L188.98 484.07L188.98 484.93L189.31 486.36L189.95 487.21L190.92 487.50L191.56 487.50L192.53 487.21L193.18 486.36L193.50 484.93L193.50 484.07L193.18 482.64L192.53 481.79L191.56 481.50L190.92 481.50M567.20 482.64L567.85 482.36L568.82 481.50L568.82 487.50M574.64 481.50L573.67 481.79L573.02 482.64L572.70 484.07L572.70 484.93L573.02 486.36L573.67 487.21L574.64 487.50L575.29 487.50L576.26 487.21L576.91 486.36L577.23 484.93L577.23 484.07L576.91 482.64L576.26 481.79L575.29 481.50L574.64 481.50M581.11 481.50L580.14 481.79L579.49 482.64L579.17 484.07L579.17 484.93L579.49 486.36L580.14 487.21L581.11 487.50L581.76 487.50L582.73 487.21L583.38 486.36L583.70 484.93L583.70 484.07L583.38 482.64L582.73 481.79L581.76 481.50L581.11 481.50M296.10 494.80L296.10 500.80M296.10 494.80L300.28 494.80M296.10 497.66L298.67 497.66M296.10 500.80L300.28 500.80M302.21 496.80L302.21 500.80M302.21 497.94L303.18 497.09L303.82 496.80L304.79 496.80L305.43 497.09L305.75 497.94L305.75 500.80M308.01 498.51L311.87 498.51L311.87 497.94L311.54 497.37L311.22 497.09L310.58 496.80L309.61 496.80L308.97 497.09L308.33 497.66L308.01 498.51L308.01 499.09L308.33 499.94L308.97 500.51L309.61 500.80L310.58 500.80L311.22 500.51L311.87 499.94M314.12 496.80L314.12 500.80M314.12 498.51L314.44 497.66L315.08 497.09L315.73 496.80L316.69 496.80M321.84 496.80L321.84 501.37L321.52 502.23L321.20 502.51L320.55 502.80L319.59 502.80L318.95 502.51M321.84 497.66L321.20 497.09L320.55 496.80L319.59 496.80L318.95 497.09L318.30 497.66L317.98 498.51L317.98 499.09L318.30 499.94L318.95 500.51L319.59 500.80L320.55 500.80L321.20 500.51L321.84 499.94M323.77 496.80L325.70 500.80M327.63 496.80L325.70 500.80L325.06 501.94L324.42 502.51L323.77 502.80L323.45 502.80M336.96 493.66L336.32 494.23L335.68 495.09L335.03 496.23L334.71 497.66L334.71 498.80L335.03 500.23L335.68 501.37L336.32 502.23L336.96 502.80M339.22 494.80L339.22 500.80M342.43 496.80L339.22 499.66M340.50 498.51L342.76 500.80M344.36 498.51L348.23 498.51L348.23 497.94L347.90 497.37L347.58 497.09L346.94 496.80L345.97 496.80L345.33 497.09L344.69 497.66L344.36 498.51L344.36 499.09L344.69 499.94L345.33 500.51L345.97 500.80L346.94 500.80L347.58 500.51L348.23 499.94M349.51 494.80L352.09 500.80M354.66 494.80L352.09 500.80M355.95 493.66L356.59 494.23L357.23 495.09L357.88 496.23L358.20 497.66L358.20 498.80L357.88 500.23L357.23 501.37L356.59 502.23L355.95 502.80M52.30 369.64L52.92 369.36L53.85 368.50L53.85 374.50M59.43 368.50L58.50 368.79L57.88 369.64L57.57 371.07L57.57 371.93L57.88 373.36L58.50 374.21L59.43 374.50L60.05 374.50L60.97 374.21L61.59 373.36L61.90 371.93L61.90 371.07L61.59 369.64L60.97 368.79L60.05 368.50L59.43 368.50M65.62 368.50L64.69 368.79L64.07 369.64L63.76 371.07L63.76 371.93L64.07 373.36L64.69 374.21L65.62 374.50L66.24 374.50L67.17 374.21L67.79 373.36L68.10 371.93L68.10 371.07L67.79 369.64L67.17 368.79L66.24 368.50L65.62 368.50M60.73 391.50L57.38 391.50L57.04 394.07L57.38 393.79L58.38 393.50L59.39 393.50L60.39 393.79L61.06 394.36L61.40 395.21L61.40 395.79L61.06 396.64L60.39 397.21L59.39 397.50L58.38 397.50L57.38 397.21L57.04 396.93L56.71 396.36M65.42 391.50L64.41 391.79L63.74 392.64L63.41 394.07L63.41 394.93L63.74 396.36L64.41 397.21L65.42 397.50L66.09 397.50L67.09 397.21L67.76 396.36L68.10 394.93L68.10 394.07L67.76 392.64L67.09 391.79L66.09 391.50L65.42 391.50M65.64 417.80L64.72 418.10L64.11 418.98L63.80 420.46L63.80 421.34L64.11 422.82L64.72 423.70L65.64 424.00L66.26 424.00L67.18 423.70L67.79 422.82L68.10 421.34L68.10 420.46L67.79 418.98L67.18 418.10L66.26 417.80L65.64 417.80M49.50 447.34L55.17 447.34M61.16 443.80L58.01 443.80L57.70 446.46L58.01 446.16L58.96 445.87L59.90 445.87L60.85 446.16L61.48 446.75L61.79 447.64L61.79 448.23L61.48 449.11L60.85 449.70L59.90 450.00L58.96 450.00L58.01 449.70L57.70 449.41L57.38 448.82M65.58 443.80L64.63 444.10L64.00 444.98L63.69 446.46L63.69 447.34L64.00 448.82L64.63 449.70L65.58 450.00L66.21 450.00L67.15 449.70L67.78 448.82L68.10 447.34L68.10 446.46L67.78 444.98L67.15 444.10L66.21 443.80L65.58 443.80M43.50 469.81L49.11 469.81M52.22 467.60L52.84 467.33L53.78 466.50L53.78 472.30M59.38 466.50L58.45 466.78L57.82 467.60L57.51 468.99L57.51 469.81L57.82 471.20L58.45 472.02L59.38 472.30L60.00 472.30L60.94 472.02L61.56 471.20L61.87 469.81L61.87 468.99L61.56 467.60L60.94 466.78L60.00 466.50L59.38 466.50M65.61 466.50L64.67 466.78L64.05 467.60L63.74 468.99L63.74 469.81L64.05 471.20L64.67 472.02L65.61 472.30L66.23 472.30L67.17 472.02L67.79 471.20L68.10 469.81L68.10 468.99L67.79 467.60L67.17 466.78L66.23 466.50L65.61 466.50" stroke="#fff" stroke-width="1" fill="none" stroke-linejoin="bevel" shape-rendering="crispEdges"/>
<path d="M561 46h7v1h-7zM564 43h1v7h-1z" fill="#2a8c2a"/>
<path d="M563 55h3v1h-3zM563 61h3v1h-3zM562 56h1v1h-1zM566 56h1v1h-1zM562 60h1v1h-1zM566 60h1v1h-1zM561 57h1v3h-1zM567 57h1v3h-1z" fill="#0000ff"/>
<path d="M561 67h7v1h-7zM561 73h7v1h-7zM561 67h1v7h-1zM567 67h1v7h-1z" fill="#80ff00"/>
</svg></body></html>
